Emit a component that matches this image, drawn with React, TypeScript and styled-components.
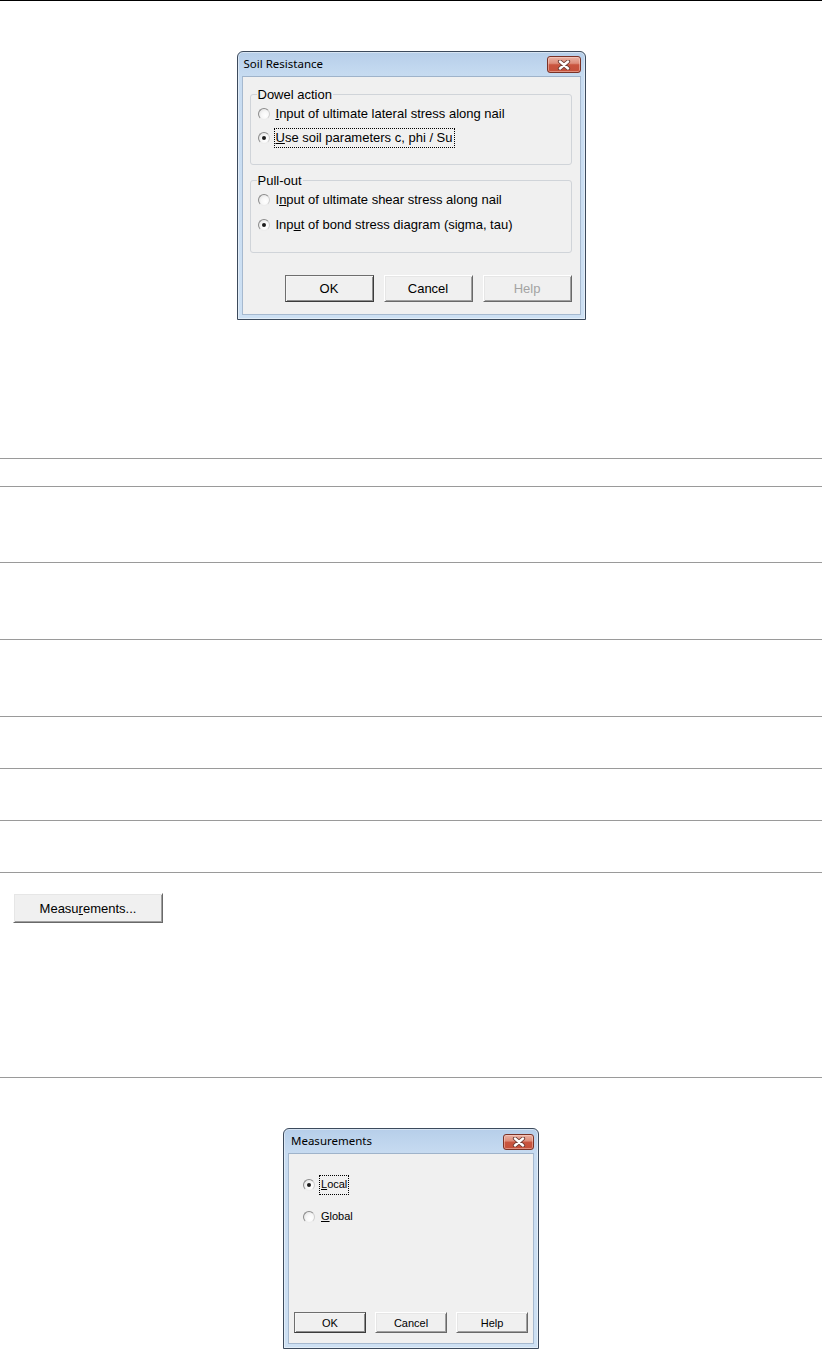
import React from "react";
import styled, { createGlobalStyle } from "styled-components";

const GlobalStyle = createGlobalStyle`
  html, body { margin: 0; padding: 0; background: #ffffff; }
  body { font-family: "Liberation Sans", Arial, sans-serif; color: #000; }
  * { box-sizing: border-box; }
`;

const Page = styled.div`
  width: 822px;
  display: flex;
  flex-direction: column;
`;

const TopRule = styled.div`
  height: 1px;
  background: #000;
`;

const Figure = styled.div<{ $top: number; $bottom: number }>`
  display: flex;
  justify-content: center;
  padding-top: ${(p) => p.$top}px;
  padding-bottom: ${(p) => p.$bottom}px;
`;

/* ---------- Window chrome ---------- */

const Window = styled.div<{ $w: number; $h: number }>`
  width: ${(p) => p.$w}px;
  height: ${(p) => p.$h}px;
  border: 1px solid #3c4a5c;
  border-radius: 6px 6px 0 0;
  background: linear-gradient(180deg, #b6cee9 0px, #c0d6ee 14px, #c8dcf1 26px, #cde0f3 100%);
  box-shadow: inset 0 0 0 1px rgba(255, 255, 255, 0.45);
  padding: 0 4px 4px 4px;
  display: flex;
  flex-direction: column;
`;

const TitleBar = styled.div<{ $pl: number }>`
  height: 24px;
  flex: none;
  display: flex;
  justify-content: space-between;
  align-items: flex-start;
  padding-left: ${(p) => p.$pl}px;
`;

const TitleText = styled.span`
  font-family: "Noto Sans", "Open Sans", sans-serif;
  font-size: 11.5px;
  line-height: 24px;
  color: #000;
`;

const CloseBtn = styled.div<{ $w: number; $h: number; $mt: number }>`
  width: ${(p) => p.$w}px;
  height: ${(p) => p.$h}px;
  margin-top: ${(p) => p.$mt}px;
  border: 1px solid #7a3226;
  border-radius: 3px;
  background: linear-gradient(180deg, #eab2a4 0%, #de8d7a 42%, #c9553f 52%, #c5503a 100%);
  box-shadow: inset 0 0 0 1px rgba(255, 220, 210, 0.45);
  display: flex;
  align-items: center;
  justify-content: center;
`;

const Client = styled.div<{ $pt: number; $pl: number; $pr: number; $pb: number }>`
  flex: 1;
  background: #f0f0f0;
  border: 1px solid #a6b9cf;
  border-top-color: #9fb3ca;
  padding: ${(p) => `${p.$pt}px ${p.$pr}px ${p.$pb}px ${p.$pl}px`};
  display: flex;
  flex-direction: column;
`;

/* ---------- Controls ---------- */

const Group = styled.fieldset<{ $mt?: number }>`
  margin: ${(p) => p.$mt ?? 0}px 0 0 0;
  padding: 0 0 14.5px 7px;
  border: 1px solid #d0d4d9;
  border-radius: 3px;
  min-width: 0;
`;

const Legend = styled.legend`
  padding: 0 1px;
  margin-left: -1px;
  font-size: 13px;
  line-height: 15px;
`;

const RadioList = styled.div<{ $gap: number; $pl: number }>`
  display: flex;
  flex-direction: column;
  gap: ${(p) => p.$gap}px;
  padding-left: ${(p) => p.$pl}px;
`;

const RadioRow = styled.div<{ $h: number; $size: number }>`
  height: ${(p) => p.$h}px;
  display: flex;
  align-items: center;
  gap: 6px;
  font-size: ${(p) => p.$size}px;
  white-space: nowrap;
`;

const RadioCircle = styled.span<{ $checked: boolean }>`
  width: 12px;
  height: 12px;
  flex: none;
  border-radius: 50%;
  border: 1px solid;
  border-color: #8b8b8b #cfcfcf #ececec #8b8b8b;
  background: radial-gradient(circle at 65% 65%, #ffffff 0%, #f7f7f7 45%, #d9d9d9 100%);
  display: flex;
  align-items: center;
  justify-content: center;
  &::after {
    content: "";
    display: ${(p) => (p.$checked ? "block" : "none")};
    width: 4px;
    height: 4px;
    border-radius: 50%;
    background: #1c1c1c;
  }
`;

const Label = styled.span<{ $focus?: boolean }>`
  padding: 1px 1px 2px 0;
  margin-left: ${(p) => (p.$focus ? -1 : 0)}px;
  padding-left: ${(p) => (p.$focus ? 1 : 0)}px;
  outline: ${(p) => (p.$focus ? "1px dotted #000" : "none")};
  line-height: 15px;
`;

const ButtonRow = styled.div<{ $justify: string; $gap: number; $pr?: number }>`
  margin-top: auto;
  display: flex;
  justify-content: ${(p) => p.$justify};
  gap: ${(p) => p.$gap}px;
  padding-right: ${(p) => p.$pr ?? 0}px;
`;

const PushButton = styled.button<{
  $w: number;
  $h: number;
  $size: number;
  $default?: boolean;
}>`
  width: ${(p) => p.$w}px;
  height: ${(p) => p.$h}px;
  padding: 0;
  font-family: "Liberation Sans", Arial, sans-serif;
  font-size: ${(p) => p.$size}px;
  color: #000;
  background: #f0f0f0;
  border: 1px solid;
  border-color: ${(p) =>
    p.$default ? "#6e6e6e #3c3c3c #3c3c3c #6e6e6e" : "#ffffff #696969 #696969 #ffffff"};
  box-shadow: ${(p) =>
    p.$default
      ? "inset 1px 1px #f6f6f6, inset -1px -1px #8e8e8e"
      : "inset 1px 1px #e6e6e6, inset -1px -1px #a0a0a0"};
  &:disabled {
    color: #a3a3a3;
  }
`;

const Table = styled.div`
  display: flex;
  flex-direction: column;
`;

const TableRow = styled.div<{ $h: number; $last?: boolean }>`
  height: ${(p) => p.$h}px;
  border-top: 1px solid #9a9a9a;
  border-bottom: ${(p) => (p.$last ? "1px solid #9a9a9a" : "none")};
  padding: 20px 0 0 13px;
`;

/* ---------- Pieces ---------- */

const CloseIcon = () => (
  <svg width="14" height="10" viewBox="0 0 14 10">
    <path d="M3 1.5 L11 8.5 M11 1.5 L3 8.5" stroke="#6b3a33" strokeWidth="4.2" strokeLinecap="round" fill="none" />
    <path d="M3 1.5 L11 8.5 M11 1.5 L3 8.5" stroke="#ffffff" strokeWidth="2.4" strokeLinecap="round" fill="none" />
  </svg>
);

type DialogProps = {
  title: string;
  w: number;
  h: number;
  titlePl: number;
  closeW: number;
  closeH: number;
  closeMt: number;
  children: React.ReactNode;
  pad: { t: number; l: number; r: number; b: number };
};

const Dialog = ({ title, w, h, titlePl, closeW, closeH, closeMt, children, pad }: DialogProps) => (
  <Window $w={w} $h={h}>
    <TitleBar $pl={titlePl}>
      <TitleText>{title}</TitleText>
      <CloseBtn $w={closeW} $h={closeH} $mt={closeMt}>
        <CloseIcon />
      </CloseBtn>
    </TitleBar>
    <Client $pt={pad.t} $pl={pad.l} $pr={pad.r} $pb={pad.b}>
      {children}
    </Client>
  </Window>
);

const Radio = ({
  checked,
  focus,
  h,
  size,
  children,
}: {
  checked: boolean;
  focus?: boolean;
  h: number;
  size: number;
  children: React.ReactNode;
}) => (
  <RadioRow $h={h} $size={size}>
    <RadioCircle $checked={checked} />
    <Label $focus={focus}>{children}</Label>
  </RadioRow>
);

const rowHeights = [28, 76, 77, 77, 52, 52, 52];

export default function App() {
  return (
    <>
      <GlobalStyle />
      <Page>
        <TopRule />
        <Figure $top={50} $bottom={138}>
          <Dialog
            title="Soil Resistance"
            w={349}
            h={269}
            titlePl={2}
            closeW={34}
            closeH={17}
            closeMt={4}
            pad={{ t: 9.5, l: 7, r: 8, b: 12 }}
          >
            <Group>
              <Legend>Dowel action</Legend>
              <Radio checked={false} h={24} size={13}>
                <u>I</u>nput of ultimate lateral stress along nail
              </Radio>
              <Radio checked h={24} size={13} focus>
                <u>U</u>se soil parameters c, phi / Su
              </Radio>
            </Group>
            <Group $mt={7.5}>
              <Legend>Pull-out</Legend>
              <Radio checked={false} h={25} size={13}>
                I<u>n</u>put of ultimate shear stress along nail
              </Radio>
              <Radio checked h={25} size={13}>
                Inp<u>u</u>t of bond stress diagram (sigma, tau)
              </Radio>
            </Group>
            <ButtonRow $justify="flex-end" $gap={10} $pr={0}>
              <PushButton $w={89} $h={27} $size={13} $default>
                OK
              </PushButton>
              <PushButton $w={89} $h={27} $size={13}>
                Cancel
              </PushButton>
              <PushButton $w={89} $h={27} $size={13} disabled>
                Help
              </PushButton>
            </ButtonRow>
          </Dialog>
        </Figure>

        <Table>
          {rowHeights.map((h, i) => (
            <TableRow key={i} $h={h} />
          ))}
          <TableRow $h={206} $last>
            <PushButton $w={150} $h={30} $size={13}>
              Measu<u>r</u>ements...
            </PushButton>
          </TableRow>
        </Table>

        <Figure $top={50} $bottom={0}>
          <Dialog
            title="Measurements"
            w={256}
            h={221}
            titlePl={3}
            closeW={31}
            closeH={16}
            closeMt={5}
            pad={{ t: 23, l: 0, r: 0, b: 10 }}
          >
            <RadioList $gap={16} $pl={14}>
              <Radio checked focus h={16} size={11}>
                <u>L</u>ocal
              </Radio>
              <Radio checked={false} h={16} size={11}>
                <u>G</u>lobal
              </Radio>
            </RadioList>
            <ButtonRow $justify="center" $gap={9}>
              <PushButton $w={72} $h={21} $size={11} $default>
                OK
              </PushButton>
              <PushButton $w={72} $h={21} $size={11}>
                Cancel
              </PushButton>
              <PushButton $w={72} $h={21} $size={11}>
                Help
              </PushButton>
            </ButtonRow>
          </Dialog>
        </Figure>
      </Page>
    </>
  );
}
